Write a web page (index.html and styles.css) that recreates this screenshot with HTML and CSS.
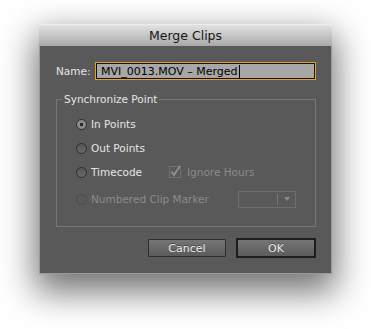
FILE: index.html
```html
<!DOCTYPE html>
<html lang="en">
<head>
    <meta charset="UTF-8">
    <title>Merge Clips</title>
    <link rel="stylesheet" href="styles.css">
</head>
<body>
    <div class="window">
        <div class="titlebar">Merge Clips</div>
        <div class="content">
            <div class="name-row">
                <label class="label" for="clip-name">Name:</label>
                <div class="field" id="clip-name">MVI_0013.MOV – Merged<span class="caret"></span></div>
            </div>

            <fieldset class="group">
                <legend>Synchronize Point</legend>
                <div class="option"><span class="radio checked"></span><span>In Points</span></div>
                <div class="option"><span class="radio"></span><span>Out Points</span></div>
                <div class="option">
                    <span class="radio"></span><span class="timecode">Timecode</span>
                    <svg class="check" width="13" height="13" viewBox="0 0 13 13">
                        <rect x="0.5" y="1.5" width="11" height="11" fill="none" stroke="#717171"/>
                        <path d="M2.5 6.5 L5 10 L11 1" fill="none" stroke="#8e8e8e" stroke-width="2"/>
                    </svg>
                    <span class="dim">Ignore Hours</span>
                </div>
                <div class="option numbered">
                    <span class="radio off"></span><span class="dim marker">Numbered Clip Marker</span>
                    <div class="select"><span class="select-sep"></span><span class="select-arrow"></span></div>
                </div>
            </fieldset>

            <div class="buttons">
                <button class="btn">Cancel</button>
                <button class="btn default">OK</button>
            </div>
        </div>
    </div>
</body>
</html>
```

FILE: styles.css
```css
:root {
    --panel: #595959;
    --text: #e6e6e6;
    --dim: #8b8b8b;
    --line: #777;
}

body {
    margin: 0;
    min-height: 100vh;
    background: #fff;
    font-family: 'DejaVu Sans', 'Liberation Sans', sans-serif;
    font-size: 10.5px;
    padding-top: 24px;
    box-sizing: border-box;
}

.window {
    width: 293px;
    margin-left: 39px;
    box-sizing: border-box;
    border-radius: 4px 4px 0 0;
    box-shadow: 0 14px 34px 4px rgba(0, 0, 0, 0.55);
}

.titlebar {
    height: 22px;
    line-height: 22px;
    text-align: center;
    font-size: 12.5px;
    color: #151515;
    background: linear-gradient(#e2e2e2, #a9a9a9);
    border-radius: 4px 4px 0 0;
    border-top: 1px solid #ececec;
    box-sizing: border-box;
}

.content {
    background: var(--panel);
    border: 1px solid #9a9a9a;
    border-top: none;
    padding: 17px 15px 15px 16px;
}

.name-row {
    display: flex;
    align-items: center;
    margin-bottom: 13px;
}

.label {
    width: 34px;
    margin-right: 6px;
    color: var(--text);
}

.field {
    flex: 1;
    height: 16px;
    line-height: 15px;
    margin-right: 1px;
    padding-left: 4px;
    box-sizing: border-box;
    border: 1px solid #111;
    box-shadow: 0 0 0 1px #e7a21b;
    background: #a7a7a7;
    color: #000;
    font-size: 11px;
    display: flex;
    align-items: center;
}

.caret {
    width: 1px;
    height: 13px;
    background: #000;
    margin-left: 1px;
}

.group {
    margin: 0;
    padding: 6px 0 15px 19px;
    border: 1px solid var(--line);
}

.group legend {
    margin-left: -14px;
    padding: 0 2px;
    line-height: 14px;
    color: var(--text);
}

.option {
    display: flex;
    align-items: center;
    height: 24px;
    color: var(--text);
}

.option.numbered {
    margin-top: 3px;
}

.radio {
    width: 11px;
    height: 11px;
    box-sizing: border-box;
    border-radius: 50%;
    border: 1px solid #2c2c2c;
    background: linear-gradient(#555, #686868);
    margin-right: 4px;
}

.radio.checked {
    background: radial-gradient(circle, #2a2a2a 0 1.5px, #8a8a8a 2px);
}

.radio.off {
    border-color: #4a4a4a;
    background: var(--panel);
}

.timecode {
    width: 78px;
}

.check {
    margin: -2px 5px 0 0;
}

.dim {
    color: var(--dim);
}

.marker {
    width: 147px;
}

.select {
    width: 58px;
    height: 17px;
    box-sizing: border-box;
    border: 1px solid #6e6e6e;
    display: flex;
    align-items: center;
    justify-content: flex-end;
}

.select-sep {
    width: 1px;
    height: 11px;
    background: #777;
    margin-right: 6px;
}

.select-arrow {
    width: 0;
    height: 0;
    border-left: 3.5px solid transparent;
    border-right: 3.5px solid transparent;
    border-top: 4px solid #8a8a8a;
    margin-right: 5px;
}

.buttons {
    display: flex;
    justify-content: flex-end;
    align-items: center;
    gap: 10px;
    margin-top: 11px;
}

.btn {
    width: 78px;
    height: 18px;
    padding: 0;
    font-family: inherit;
    font-size: 11px;
    color: #ececec;
    text-shadow: 0 -1px 0 rgba(0, 0, 0, 0.4);
    background: linear-gradient(#767676, #5b5b5b);
    border: 1px solid #2e2e2e;
    border-radius: 1px;
}

.btn.default {
    width: 80px;
    height: 20px;
    border: 2px solid #1d1d1d;
}
```
